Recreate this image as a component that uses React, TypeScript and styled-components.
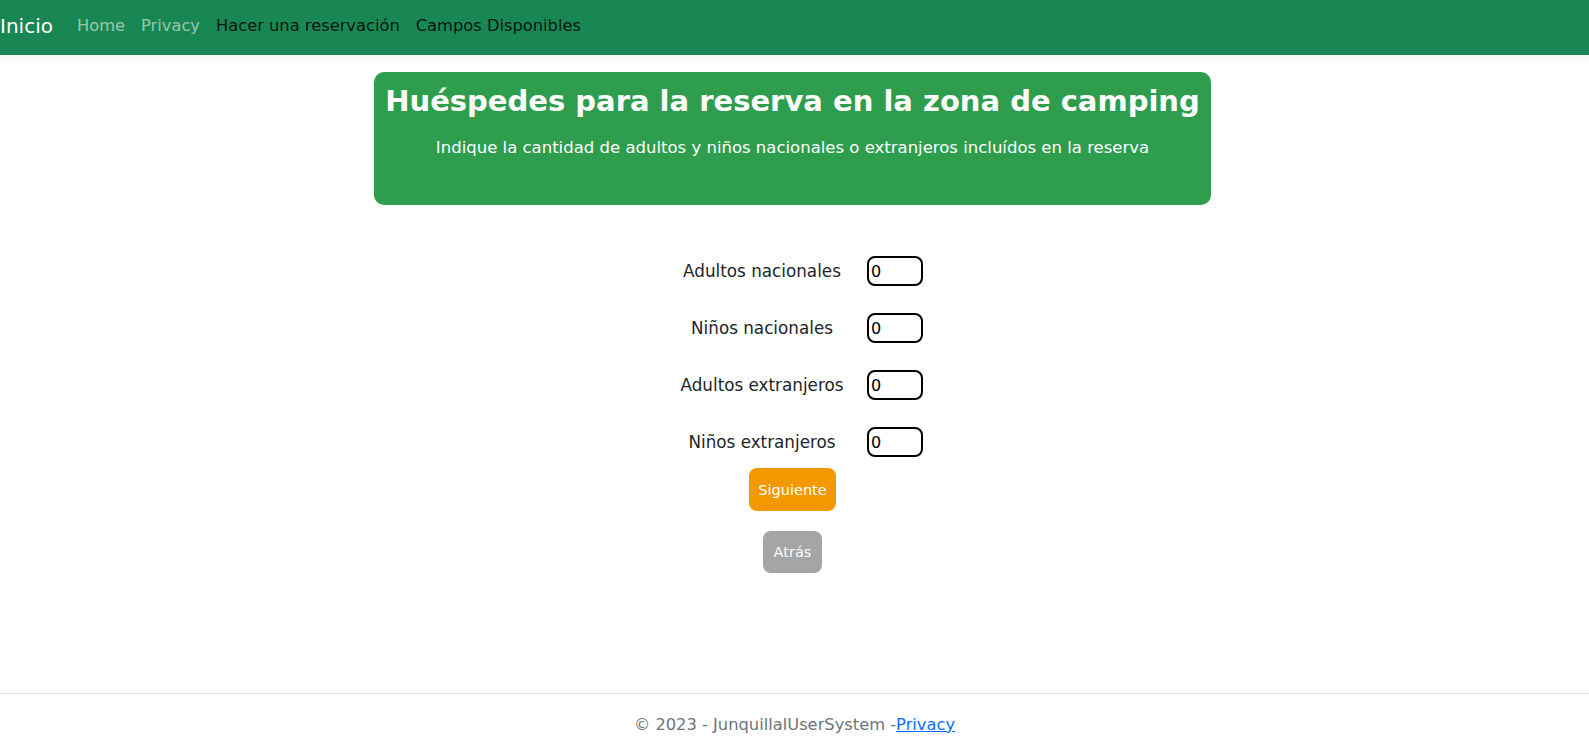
import React from "react";
import styled, { createGlobalStyle } from "styled-components";

const Global = createGlobalStyle`
  html, body { margin: 0; padding: 0; background: #fff; }
  body {
    font-family: "DejaVu Sans", "Noto Sans", sans-serif;
    font-size: 16px;
    color: #212529;
  }
  * { box-sizing: border-box; }
`;

const Page = styled.div`
  min-height: 748px;
  display: flex;
  flex-direction: column;
`;

const NavBar = styled.nav`
  height: 55px;
  padding-bottom: 2px;
  background: #198754;
  display: flex;
  align-items: center;
  box-shadow: 0 4px 12px rgba(0, 0, 0, 0.05);
  border-bottom: 1px solid rgba(0, 0, 0, 0.04);
`;

const Brand = styled.a`
  color: #fff;
  font-size: 20px;
  margin-right: 16px;
  text-decoration: none;
  line-height: 30px;
`;

const NavLink = styled.a<{ $dark?: boolean }>`
  color: ${(p) => (p.$dark ? "rgba(0,0,0,0.85)" : "rgba(255,255,255,0.55)")};
  padding: 0 8px;
  font-size: 16.3px;
  text-decoration: none;
  line-height: 24px;
`;

const Main = styled.main`
  flex: 1;
  display: flex;
  flex-direction: column;
  align-items: center;
  padding-top: 17px;
  margin-right: 4px;
`;

const Banner = styled.section`
  width: 837px;
  height: 133px;
  background: #2e9e4e;
  border-radius: 10px;
  color: #fff;
  text-align: center;
  padding-top: 11px;
`;

const Title = styled.h1`
  margin: 0;
  font-size: 29px;
  font-weight: 700;
  line-height: 36px;
  white-space: nowrap;
`;

const Subtitle = styled.p`
  margin: 17px 0 0;
  font-size: 16.5px;
  line-height: 24px;
  white-space: nowrap;
`;

const Form = styled.div`
  margin-top: 51px;
  display: grid;
  grid-template-columns: 180px 56px;
  column-gap: 15px;
  row-gap: 27px;
  align-items: center;
  padding-left: 10px;
`;

const Label = styled.label`
  text-align: center;
  font-size: 16.8px;
  color: #212529;
`;

const NumInput = styled.input`
  width: 56px;
  height: 30px;
  border: 2px solid #000;
  border-radius: 8px;
  font-family: "DejaVu Sans", sans-serif;
  font-size: 16px;
  padding: 0 2px;
  color: #000;
  outline: none;
`;

const Button = styled.button<{ $variant: "primary" | "back" }>`
  border: none;
  border-radius: 8px;
  color: #fff;
  font-family: "DejaVu Sans", sans-serif;
  font-size: 14.5px;
  height: ${(p) => (p.$variant === "primary" ? "43px" : "42px")};
  width: ${(p) => (p.$variant === "primary" ? "87px" : "59px")};
  background: ${(p) => (p.$variant === "primary" ? "#f39800" : "#a5a5a5")};
  margin-top: ${(p) => (p.$variant === "primary" ? "11px" : "20px")};
  padding: 0;
  cursor: pointer;
`;

const Footer = styled.footer`
  border-top: 1px solid #dee2e6;
  height: 55px;
  padding-top: 6px;
  display: flex;
  align-items: center;
  justify-content: center;
  color: #6c757d;
  font-size: 16.3px;
`;

const FooterLink = styled.a`
  color: #0d6efd;
  text-decoration: underline;
`;

const rows = [
  "Adultos nacionales",
  "Niños nacionales",
  "Adultos extranjeros",
  "Niños extranjeros",
];

export default function App() {
  return (
    <Page>
      <Global />
      <NavBar>
        <Brand href="#">Inicio</Brand>
        <NavLink href="#">Home</NavLink>
        <NavLink href="#">Privacy</NavLink>
        <NavLink href="#" $dark>Hacer una reservación</NavLink>
        <NavLink href="#" $dark>Campos Disponibles</NavLink>
      </NavBar>
      <Main>
        <Banner>
          <Title>Huéspedes para la reserva en la zona de camping</Title>
          <Subtitle>
            Indique la cantidad de adultos y niños nacionales o extranjeros incluídos en la reserva
          </Subtitle>
        </Banner>
        <Form>
          {rows.map((r) => (
            <React.Fragment key={r}>
              <Label>{r}</Label>
              <NumInput type="text" defaultValue="0" />
            </React.Fragment>
          ))}
        </Form>
        <Button $variant="primary">Siguiente</Button>
        <Button $variant="back">Atrás</Button>
      </Main>
      <Footer>
        © 2023 - JunquillalUserSystem -<FooterLink href="#">Privacy</FooterLink>
      </Footer>
    </Page>
  );
}
